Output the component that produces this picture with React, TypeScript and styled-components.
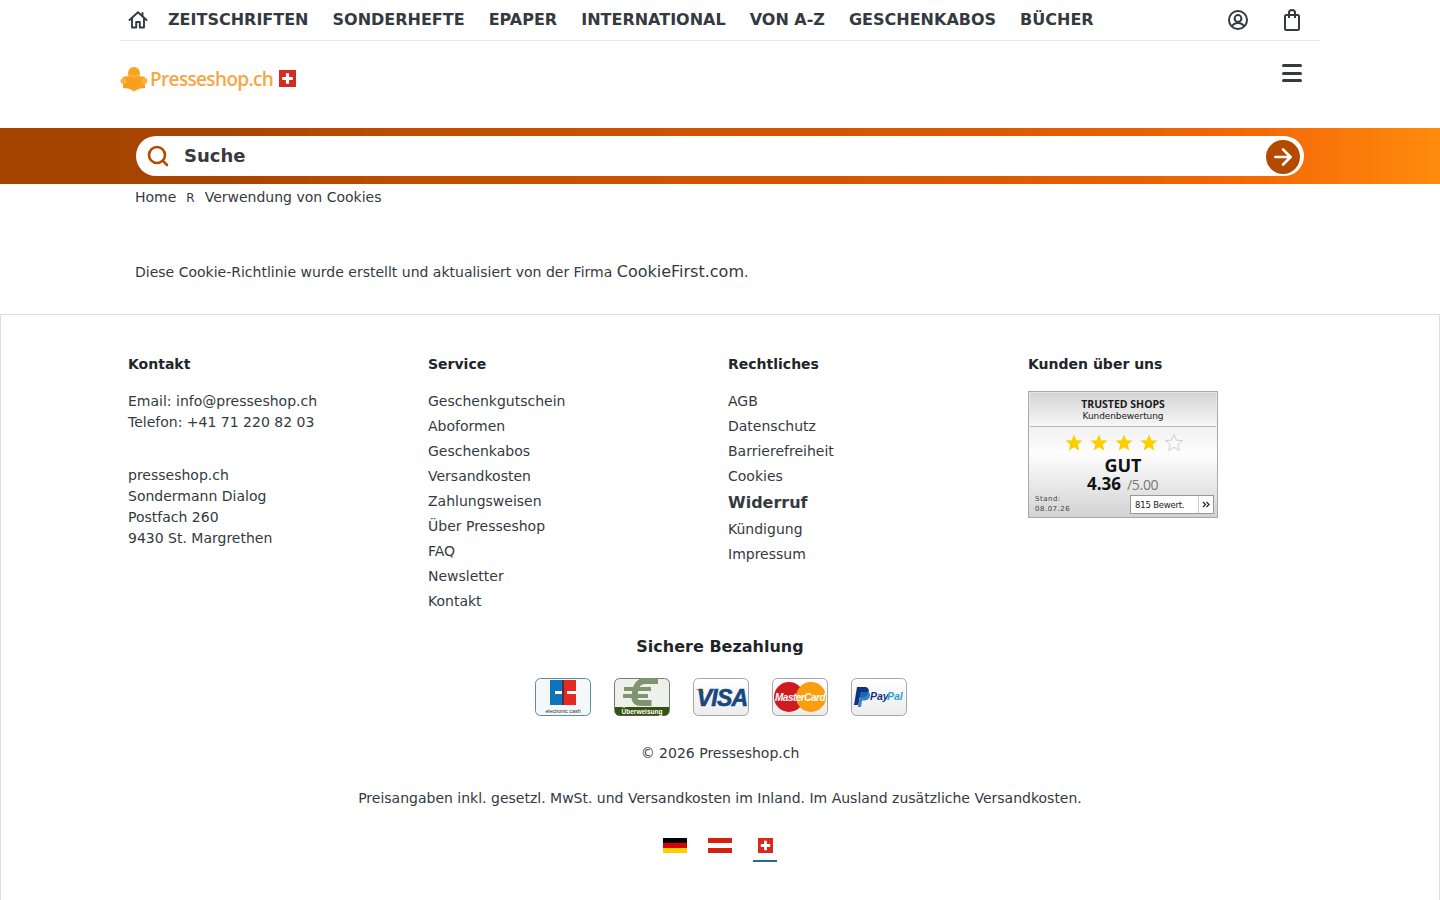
import React from 'react';
import styled, { createGlobalStyle } from 'styled-components';
import { ArrowRight, Search } from 'lucide-react';

const GlobalStyle = createGlobalStyle`
html, body {
  margin: 0;
  padding: 0;
  background: #fff;
  font-family: "DejaVu Sans", sans-serif;
  color: #343a40;
}
* { box-sizing: border-box; }
a { color: inherit; text-decoration: none; }
`;

const TopBar = styled.div`
  width: 1200px;
  margin: 0 auto;
  height: 41px;
  border-bottom: 1px solid #e9e9e9;
  display: flex;
  align-items: center;
  padding-left: 8px;
`;

const HomeLink = styled.a`
  display: flex;
  width: 20px;
  margin-right: 20px;
  color: #343a40;
`;

const NavList = styled.nav`
  display: flex;
  gap: 24px;
  flex: 1;
`;

const NavItem = styled.a`
  font-size: 16px;
  font-weight: 700;
  color: #343a40;
  line-height: 38px;
  white-space: nowrap;
`;

const TopIcons = styled.div`
  display: flex;
  gap: 30px;
  padding-right: 16px;
`;

const LogoRow = styled.div`
  width: 1200px;
  margin: 0 auto;
  height: 87px;
  display: flex;
  justify-content: space-between;
  align-items: flex-start;
`;

const Logo = styled.a`
  display: flex;
  align-items: center;
  margin-top: 25px;
`;

const LogoText = styled.span`
  font-family: "Open Sans", sans-serif;
  font-size: 19px;
  font-weight: 600;
  color: #f8a544;
  letter-spacing: -0.65px;
  margin-left: 2px;
  line-height: 26px;
`;

const SwissSmall = styled.span`
  display: flex;
  margin-left: 6px;
  margin-top: -2px;
`;

const MenuButton = styled.button`
  border: 0;
  background: none;
  padding: 0;
  margin: 23px 18px 0 0;
  width: 20px;
  height: 18px;
  display: flex;
  flex-direction: column;
  justify-content: space-between;
`;

const MenuLine = styled.span`
  display: block;
  height: 3px;
  width: 20px;
  border-radius: 1.5px;
  background: #343a40;
`;

const SearchBand = styled.div`
  height: 56px;
  background: linear-gradient(90deg, #a64300 0%, #a84400 15%, #bf4e00 28%, #db5b03 70%, #f56a08 88%, #ff8b0c 100%);
  padding: 8px 0;
`;

const SearchInner = styled.div`
  width: 1200px;
  margin: 0 auto;
  padding: 0 16px;
`;

const SearchBox = styled.div`
  height: 40px;
  background: #fff;
  border-radius: 20px;
  display: flex;
  align-items: center;
  padding: 0 4px 0 10px;
  color: #b34a00;
`;

const SearchLabel = styled.span`
  flex: 1;
  margin: 0 0 2px 14px;
  font-size: 18px;
  font-weight: 700;
  color: #3a3a3a;
`;

const SearchGo = styled.span`
  width: 34px;
  height: 34px;
  margin-top: 2px;
  border-radius: 50%;
  background: #b34a00;
  display: flex;
  align-items: center;
  justify-content: center;
  color: #fff;
`;

const Main = styled.main`
  width: 1200px;
  margin: 0 auto;
  padding: 0 15px;
  height: 130px;
`;

const Breadcrumb = styled.div`
  display: flex;
  align-items: center;
  font-size: 14px;
  line-height: 26px;
  color: #343a40;
`;

const CrumbSeparator = styled.span`
  font-size: 12px;
  line-height: 20px;
  margin: 2px 10px 0;
`;

const Notice = styled.p`
  margin: 49px 0 0;
  font-size: 14px;
  line-height: 26px;
  color: #343a40;
`;

const NoticeLink = styled.a`
  font-size: 16px;
`;

const Footer = styled.footer`
  border: 1px solid #ddd;
  border-bottom: 0;
  height: 586px;
  overflow: hidden;
`;

const FooterGrid = styled.div`
  width: 1200px;
  margin: 0 auto;
  padding: 39px 0 0 8px;
  display: grid;
  grid-template-columns: repeat(4, 300px);
  height: 322px;
`;

const ColumnTitle = styled.h4`
  margin: 0 0 17px;
  font-size: 14px;
  line-height: 20px;
  font-weight: 700;
  color: #212529;
`;

const TextLine = styled.div<{ $gap?: number }>`
  font-size: 14px;
  line-height: 21px;
  color: #343a40;
  margin-top: ${p => p.$gap ?? 0}px;
`;

const LinkList = styled.div`
  display: flex;
  flex-direction: column;
  margin-top: -2px;
`;

const FooterLink = styled.a<{ $big?: boolean }>`
  font-size: ${p => (p.$big ? 16 : 14)}px;
  font-weight: ${p => (p.$big ? 700 : 400)};
  line-height: 25px;
  height: ${p => (p.$big ? 28 : 25)}px;
  ${p => p.$big && 'padding-top: 1px;'}
  color: #343a40;
`;

const Badge = styled.div`
  width: 190px;
  height: 127px;
  display: flex;
`;

const Payments = styled.section`
  display: flex;
  flex-direction: column;
  align-items: center;
`;

const PaymentTitle = styled.h4`
  margin: 0;
  font-size: 16px;
  line-height: 20px;
  font-weight: 700;
  color: #212529;
`;

const CardRow = styled.div`
  display: flex;
  gap: 23px;
  margin-top: 21px;
  padding-left: 2px;
`;

const PayCard = styled.div`
  width: 56px;
  height: 38px;
  display: flex;
`;

const Copyright = styled.div`
  margin-top: 27px;
  font-size: 14px;
  line-height: 20px;
  color: #343a40;
`;

const PriceNote = styled.div`
  margin-top: 25px;
  font-size: 14px;
  line-height: 20px;
  color: #343a40;
`;

const FlagRow = styled.div`
  display: flex;
  gap: 21px;
  margin-top: 30px;
`;

const FlagItem = styled.a<{ $active?: boolean }>`
  width: 24px;
  height: 24px;
  display: flex;
  justify-content: center;
  border-bottom: 2px solid ${p => (p.$active ? '#266c8c' : 'transparent')};
`;

const navItems = ['ZEITSCHRIFTEN', 'SONDERHEFTE', 'EPAPER', 'INTERNATIONAL', 'VON A-Z', 'GESCHENKABOS', 'BÜCHER'];
const serviceLinks = ['Geschenkgutschein', 'Aboformen', 'Geschenkabos', 'Versandkosten', 'Zahlungsweisen', 'Über Presseshop', 'FAQ', 'Newsletter', 'Kontakt'];

function HomeIcon() {
  return (
    <svg width="20" height="20" viewBox="0 0 20 20" fill="none" stroke="currentColor" strokeWidth="1.9" strokeLinejoin="round" strokeLinecap="round">
      <path d="M1.500 10 10 2.200 18.500 10" />
      <path d="M4 8v9.500h4.200v-5.500h3.600v5.500H16V8" />
      <path d="M14.500 5.500V3" />
    </svg>
  );
}

function UserIcon() {
  return (
    <svg width="24" height="24" viewBox="0 0 24 24" fill="none" stroke="#343a40" strokeWidth="2">
      <circle cx="12" cy="12" r="9" />
      <circle cx="12" cy="10.500" r="3.400" />
      <path d="M6 18.500c1.200-2.400 3.400-3.400 6-3.400s4.800 1 6 3.400" />
    </svg>
  );
}

function BagIcon() {
  return (
    <svg width="24" height="24" viewBox="0 0 24 24" fill="none" stroke="#343a40" strokeWidth="2" strokeLinejoin="round">
      <rect x="5" y="7" width="14" height="15" rx="1.500" />
      <path d="M9 10V4.500C9 3 10.300 2 12 2s3 1 3 2.500V10" />
    </svg>
  );
}

function LogoMark() {
  return (
    <svg width="28" height="25" viewBox="0 0 28 25">
      <circle cx="14" cy="6" r="6" fill="#f9a31e" />
      <path d="M3 10c4-1.500 8-1 11 1 3-2 7-2.500 11-1v11c-4 0-8 1-11 3.500C11 22 7 21 3 21z" fill="#f8a01e" />
      <path d="M8 8.500c3-.5 4.500 0 6 1.500 1.500-1.500 3-2 6-1.500" fill="none" stroke="#fbbb55" strokeWidth="1.200" />
      <circle cx="3.500" cy="14" r="3" fill="#fbb040" />
      <circle cx="24.500" cy="14" r="3" fill="#fbb040" />
    </svg>
  );
}

function SwissFlag({ size }: { size: number }) {
  return (
    <svg width={size} height={size} viewBox="0 0 16 16">
      <rect width="16" height="16" fill="#d52b1e" />
      <path d="M6.500 3h3v3.500H13v3H9.500V13h-3V9.500H3v-3h3.500z" fill="#fff" />
    </svg>
  );
}

function TrustedBadge() {
  const stars = [46, 71, 96, 121];
  const star = 'M0-8.500 2.400-2.800 8.500-2.400 3.800 1.500 5.300 7.500 0 4.300-5.300 7.500-3.800 1.500-8.500-2.400-2.400-2.800z';
  return (
    <svg width="190" height="127" viewBox="0 0 190 127">
      <defs>
        <linearGradient id="tsTop" x1="0" y1="0" x2="0" y2="1">
          <stop offset="0" stopColor="#d4d4d4" />
          <stop offset="1" stopColor="#f7f7f7" />
        </linearGradient>
        <linearGradient id="tsBody" x1="0" y1="0" x2="0" y2="1">
          <stop offset="0" stopColor="#e4e4e4" />
          <stop offset="0.500" stopColor="#fdfdfd" />
          <stop offset="1" stopColor="#d2d2d2" />
        </linearGradient>
      </defs>
      <rect x="0.500" y="0.500" width="189" height="126" fill="url(#tsBody)" stroke="#a9a9a9" />
      <rect x="2" y="2" width="186" height="33" fill="url(#tsTop)" />
      <line x1="2" y1="35.500" x2="188" y2="35.500" stroke="#b5b5b5" />
      <text x="95" y="17" textAnchor="middle" fontFamily="Open Sans" fontWeight="700" fontSize="10.500" fill="#1c1c1c">TRUSTED SHOPS</text>
      <text x="95" y="28" textAnchor="middle" fontFamily="DejaVu Sans" fontSize="9" fill="#222" letterSpacing="-0.100">Kundenbewertung</text>
      {stars.map(x => (
        <path key={x} d={star} transform={`translate(${x} 52)`} fill="#fcd000" />
      ))}
      <path d={star} transform="translate(146 52)" fill="#fafafa" stroke="#c4c4c4" strokeWidth="0.800" />
      <text x="95" y="81" textAnchor="middle" fontFamily="Open Sans" fontWeight="700" fontSize="18" fill="#111">GUT</text>
      <text x="59" y="99" fontFamily="Open Sans" fontWeight="700" fontSize="17" fill="#111">4.36</text>
      <text x="99" y="99" fontFamily="Open Sans" fontSize="14" fill="#777" letterSpacing="-0.300">/5.00</text>
      <text x="7" y="110" fontFamily="DejaVu Sans" fontSize="7" fill="#444" letterSpacing="0.500">Stand:</text>
      <text x="7" y="120" fontFamily="DejaVu Sans" fontSize="7" fill="#444" letterSpacing="0.500">08.07.26</text>
      <rect x="102.500" y="104.500" width="83" height="18" fill="#fff" stroke="#999" />
      <line x1="170.500" y1="105" x2="170.500" y2="122" stroke="#ccc" />
      <text x="107" y="117" fontFamily="DejaVu Sans" fontSize="8.500" fill="#222" letterSpacing="-0.200">815 Bewert.</text>
      <path d="M175 111l2.500 2.500-2.500 2.500M178.500 111l2.500 2.500-2.500 2.500" fill="none" stroke="#222" strokeWidth="1.200" />
    </svg>
  );
}

function CardFrame({ children, id }: { children: React.ReactNode; id: string }) {
  return (
    <svg width="56" height="38" viewBox="0 0 56 38">
      <defs>
        <linearGradient id={id} x1="0" y1="0" x2="0" y2="1">
          <stop offset="0" stopColor="#ffffff" />
          <stop offset="1" stopColor="#ececec" />
        </linearGradient>
        <clipPath id={`${id}c`}>
          <rect x="0.500" y="0.500" width="55" height="37" rx="5" />
        </clipPath>
      </defs>
      <rect x="0.500" y="0.500" width="55" height="37" rx="5" fill={`url(#${id})`} />
      <g clipPath={`url(#${id}c)`}>{children}</g>
      <rect x="0.500" y="0.500" width="55" height="37" rx="5" fill="none" stroke="#a5a5a5" />
    </svg>
  );
}

function EcCard() {
  return (
    <svg width="56" height="38" viewBox="0 0 56 38">
      <rect x="0.500" y="0.500" width="55" height="37" rx="5" fill="#f4f8f8" stroke="#5b8ca5" />
      <rect x="15" y="2" width="13" height="25" fill="#0f74bb" />
      <rect x="28" y="2" width="13" height="25" fill="#e32a22" />
      <rect x="20" y="13" width="8" height="3" fill="#fff" />
      <rect x="32" y="13" width="9" height="3" fill="#fff" />
      <rect x="27" y="2" width="2" height="25" fill="#5a2a4a" />
      <text x="28" y="35" textAnchor="middle" fontFamily="Liberation Sans" fontSize="5.500" fill="#333" letterSpacing="-0.100">electronic cash</text>
    </svg>
  );
}

function TransferCard() {
  return (
    <svg width="56" height="38" viewBox="0 0 56 38">
      <rect x="0.500" y="0.500" width="55" height="37" rx="5" fill="#eef0ea" stroke="#777" />
      <path d="M44 3H31C25 3 21.500 8 21 14l-.5 6c0 3 2.500 5 6 5h11" fill="none" stroke="#7f9470" strokeWidth="6" />
      <path d="M10 11h27M9 18h25" fill="none" stroke="#7f9470" strokeWidth="4" />
      <path d="M1 29h54v4a4.500 4.500 0 0 1-4.500 4.500h-45A4.500 4.500 0 0 1 1 33z" fill="#33530f" />
      <text x="28" y="35.500" textAnchor="middle" fontFamily="Liberation Sans" fontWeight="700" fontSize="6.500" fill="#fff">Überweisung</text>
    </svg>
  );
}

function VisaCard() {
  return (
    <CardFrame id="visa">
      <path d="M2 11h8l1 5z" fill="#f2a51e" />
      <text x="29" y="28" textAnchor="middle" fontFamily="Liberation Sans" fontWeight="700" fontStyle="italic" fontSize="23" fill="#17477f" stroke="#17477f" strokeWidth="0.600" letterSpacing="-0.800">VISA</text>
    </CardFrame>
  );
}

function MasterCard() {
  return (
    <CardFrame id="mc">
      <circle cx="17" cy="19" r="15" fill="#cf1a1f" />
      <circle cx="39" cy="19" r="15" fill="#fb9d0d" />
      <text x="28" y="23" textAnchor="middle" fontFamily="Liberation Sans" fontWeight="700" fontStyle="italic" fontSize="10" fill="#fff" letterSpacing="-0.500">MasterCard</text>
    </CardFrame>
  );
}

function PayPalCard() {
  return (
    <CardFrame id="pp">
      <path d="M3 27 6 9h7c4 0 5.500 2 4.500 5.500-1 3.500-3.500 5-7 5H8.500L7.300 27z" fill="#12337c" />
      <path d="M7 29l2.500-15h6c3 0 4 1.500 3.500 4-.7 3-3 4.500-6 4.500h-2L10 29z" fill="#1a6fbe" opacity="0.850" />
      <text x="19" y="22" fontFamily="Liberation Sans" fontWeight="700" fontStyle="italic" fontSize="10.500" fill="#12337c">Pay</text>
      <text x="36" y="22" fontFamily="Liberation Sans" fontWeight="700" fontStyle="italic" fontSize="10.500" fill="#2b9fd9">Pal</text>
    </CardFrame>
  );
}

function GermanFlag() {
  return (
    <svg width="24" height="15" viewBox="0 0 24 15">
      <rect width="24" height="5" fill="#000" />
      <rect y="5" width="24" height="5" fill="#d00" />
      <rect y="10" width="24" height="5" fill="#ffce00" />
    </svg>
  );
}

function AustrianFlag() {
  return (
    <svg width="24" height="15" viewBox="0 0 24 15">
      <rect width="24" height="15" fill="#fff" />
      <rect width="24" height="5" fill="#d8200e" />
      <rect y="10" width="24" height="5" fill="#d8200e" />
    </svg>
  );
}

export default function App() {
  return (
    <>
      <GlobalStyle />
      <TopBar>
        <HomeLink href="#"><HomeIcon /></HomeLink>
        <NavList>
          {navItems.map(item => <NavItem key={item} href="#">{item}</NavItem>)}
        </NavList>
        <TopIcons>
          <UserIcon />
          <BagIcon />
        </TopIcons>
      </TopBar>
      <LogoRow>
        <Logo href="#">
          <LogoMark />
          <LogoText>Presseshop.ch</LogoText>
          <SwissSmall><SwissFlag size={17} /></SwissSmall>
        </Logo>
        <MenuButton aria-label="Menu">
          <MenuLine />
          <MenuLine />
          <MenuLine />
        </MenuButton>
      </LogoRow>
      <SearchBand>
        <SearchInner>
          <SearchBox>
            <Search size={24} strokeWidth={2.600} />
            <SearchLabel>Suche</SearchLabel>
            <SearchGo><ArrowRight size={26} strokeWidth={2.400} /></SearchGo>
          </SearchBox>
        </SearchInner>
      </SearchBand>
      <Main>
        <Breadcrumb>
          <a href="#">Home</a>
          <CrumbSeparator>R</CrumbSeparator>
          <a href="#">Verwendung von Cookies</a>
        </Breadcrumb>
        <Notice>
          Diese Cookie-Richtlinie wurde erstellt und aktualisiert von der Firma <NoticeLink href="#">CookieFirst.com</NoticeLink>.
        </Notice>
      </Main>
      <Footer>
        <FooterGrid>
          <div>
            <ColumnTitle>Kontakt</ColumnTitle>
            <TextLine>Email: info@presseshop.ch</TextLine>
            <TextLine>Telefon: +41 71 220 82 03</TextLine>
            <TextLine $gap={32}>presseshop.ch</TextLine>
            <TextLine>Sondermann Dialog</TextLine>
            <TextLine>Postfach 260</TextLine>
            <TextLine>9430 St. Margrethen</TextLine>
          </div>
          <div>
            <ColumnTitle>Service</ColumnTitle>
            <LinkList>
              {serviceLinks.map(link => <FooterLink key={link} href="#">{link}</FooterLink>)}
            </LinkList>
          </div>
          <div>
            <ColumnTitle>Rechtliches</ColumnTitle>
            <LinkList>
              <FooterLink href="#">AGB</FooterLink>
              <FooterLink href="#">Datenschutz</FooterLink>
              <FooterLink href="#">Barrierefreiheit</FooterLink>
              <FooterLink href="#">Cookies</FooterLink>
              <FooterLink href="#" $big>Widerruf</FooterLink>
              <FooterLink href="#">Kündigung</FooterLink>
              <FooterLink href="#">Impressum</FooterLink>
            </LinkList>
          </div>
          <div>
            <ColumnTitle>Kunden über uns</ColumnTitle>
            <Badge><TrustedBadge /></Badge>
          </div>
        </FooterGrid>
        <Payments>
          <PaymentTitle>Sichere Bezahlung</PaymentTitle>
          <CardRow>
            <PayCard><EcCard /></PayCard>
            <PayCard><TransferCard /></PayCard>
            <PayCard><VisaCard /></PayCard>
            <PayCard><MasterCard /></PayCard>
            <PayCard><PayPalCard /></PayCard>
          </CardRow>
          <Copyright>© 2026 Presseshop.ch</Copyright>
          <PriceNote>Preisangaben inkl. gesetzl. MwSt. und Versandkosten im Inland. Im Ausland zusätzliche Versandkosten.</PriceNote>
          <FlagRow>
            <FlagItem href="#"><GermanFlag /></FlagItem>
            <FlagItem href="#"><AustrianFlag /></FlagItem>
            <FlagItem href="#" $active><SwissFlag size={15} /></FlagItem>
          </FlagRow>
        </Payments>
      </Footer>
    </>
  );
}
